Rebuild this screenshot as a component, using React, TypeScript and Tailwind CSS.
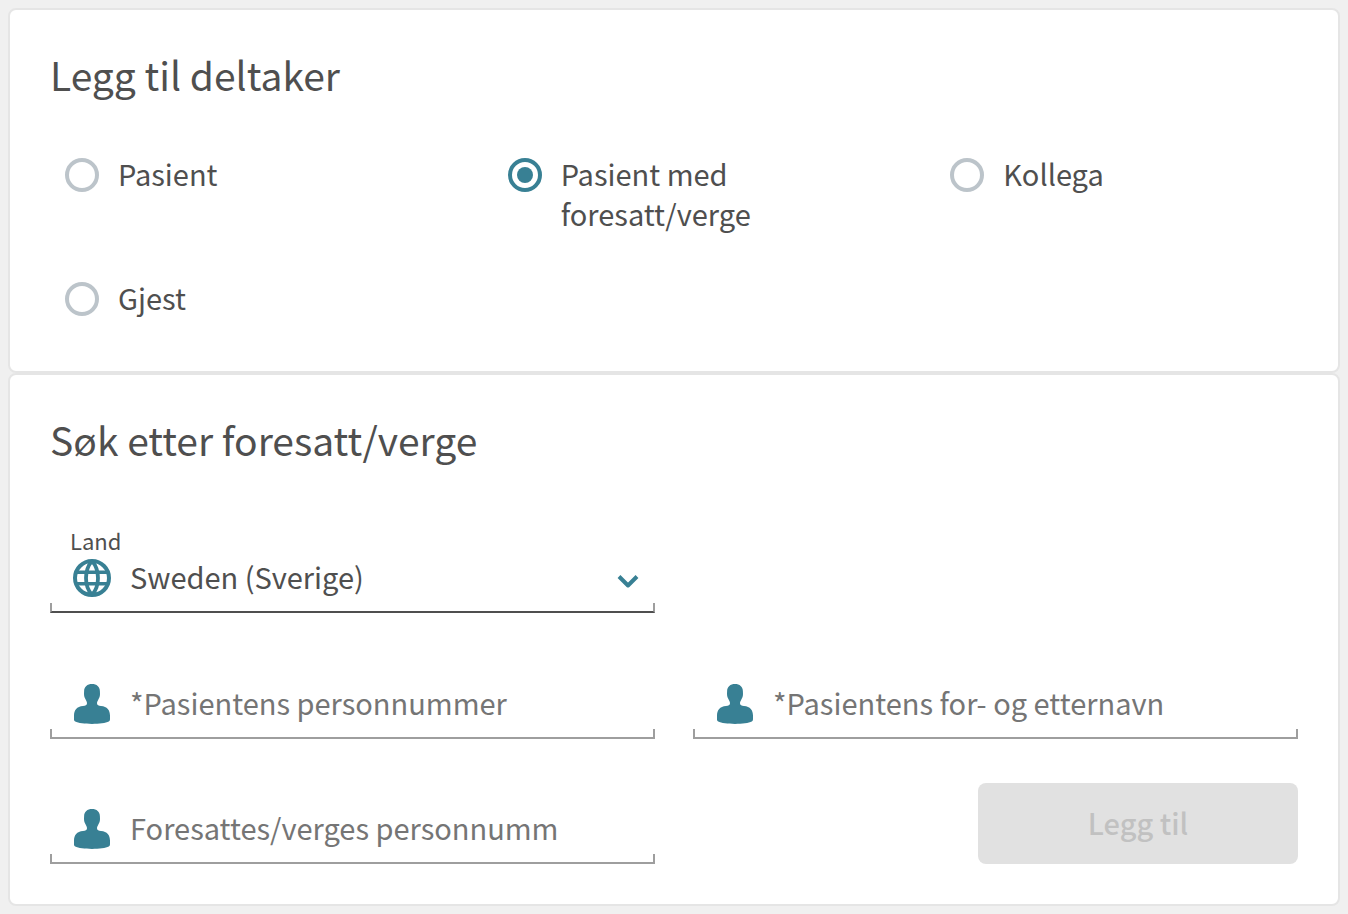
import { useState } from "react";
import type { ReactNode } from "react";

const participantTypes = ["Pasient", "Pasient med foresatt/verge", "Kollega", "Gjest"];

function GlobeIcon() {
  return (
    <svg viewBox="0 0 40 40" className="size-10 shrink-0 text-[#388094]" fill="none" stroke="currentColor" strokeWidth="4" aria-hidden="true">
      <circle cx="20" cy="20" r="17" />
      <path d="M20 3C12 12 12 28 20 37M20 3c8 9 8 25 0 34" strokeWidth="3.800" />
      <path d="M4.500 14.300h31M4.500 25.700h31" strokeWidth="3.600" />
    </svg>
  );
}

function PersonIcon() {
  return (
    <svg viewBox="0 0 40 40" className="size-10 shrink-0 text-[#388094]" fill="currentColor" aria-hidden="true">
      <path d="M20 0c4.600 0 7.900 2.700 7.900 7.200 0 1 .1 1.600.1 2.800 0 3-1.100 4.300-1.900 5.900-.7 1.400-1.100 2-1.100 3.300 0 1.900 1.600 2.500 4 2.700 6.200.6 9 3.900 9 9.900V35c0 1.300-.2 2-1.200 2.600-3 1.600-9.500 2.400-16.800 2.400S6.200 39.200 3.200 37.600C2.200 37 2 36.300 2 35v-3.200c0-6 2.800-9.300 9-9.900 2.400-.2 4-.8 4-2.700 0-1.300-.4-1.900-1.100-3.300-.8-1.600-1.900-2.900-1.900-5.900 0-1.200.1-1.800.1-2.800C12.100 2.700 15.400 0 20 0Z" />
    </svg>
  );
}

function Card({ title, children }: { title: string; children: ReactNode }) {
  return (
    <section className="rounded-lg border-2 border-[#e5e5e5] bg-white px-10 pt-[38px] pb-10">
      <h2 className="text-[39px] leading-[52px]">{title}</h2>
      {children}
    </section>
  );
}

function TextField({ id, label }: { id: string; label: string }) {
  return (
    <div className="flex flex-col justify-end">
      <div className="flex h-[50px] items-center gap-[18px] pr-24 pl-[22px]">
        <PersonIcon />
        <input
          id={id}
          type="text"
          aria-label={label}
          placeholder={label}
          className="h-[50px] min-w-0 flex-1 bg-transparent pb-1 outline-none placeholder:text-[#757575]"
        />
      </div>
      <div className="h-[10px] border-x-2 border-b-2 border-[#9e9e9e]" />
    </div>
  );
}

export default function App() {
  const [selected, setSelected] = useState(participantTypes[1]);

  return (
    <main className="min-h-screen bg-[#f0f0f0] p-2 font-['Noto_Sans_CJK_SC',sans-serif] text-[29px] leading-10 text-[#4f4f4f]">
      <Card title="Legg til deltaker">
        <div className="mt-[53px] mb-[14px] grid grid-cols-3 gap-x-20 gap-y-11">
          {participantTypes.map((type) => (
            <label key={type} className="flex items-start gap-[19px] pl-[15px]">
              <input
                type="radio"
                name="participant"
                checked={selected === type}
                onChange={() => setSelected(type)}
                className="mt-[5px] grid size-[34px] shrink-0 appearance-none place-items-center rounded-full border-4 border-[#bcc4ca] before:size-4 before:rounded-full checked:border-[#388094] checked:before:bg-[#388094]"
              />
              <span>{type}</span>
            </label>
          ))}
        </div>
      </Card>

      <Card title="Søk etter foresatt/verge">
        <form onSubmit={(e) => e.preventDefault()} className="mt-[67px]">
          <div className="mb-[45px] grid grid-cols-2 gap-x-[38px]">
            <div>
              <label htmlFor="country" className="block pb-1 pl-5 text-[22px] leading-[17px]">
                Land
              </label>
              <div className="relative flex h-[50px] items-center gap-[18px] pl-[22px]">
                <GlobeIcon />
                <select id="country" className="h-[50px] min-w-0 flex-1 appearance-none bg-transparent pb-1 outline-none">
                  <option>Sweden (Sverige)</option>
                </select>
                <svg viewBox="0 0 22 16" className="pointer-events-none absolute top-5 right-4 h-4 w-[22px] text-[#388094]" fill="none" stroke="currentColor" strokeWidth="4" strokeLinejoin="round" aria-hidden="true">
                  <path d="M2 3.500l9 9 9-9" />
                </svg>
              </div>
              <div className="h-[10px] border-x-2 border-b-2 border-x-[#9e9e9e] border-b-[#4f4f4f]" />
            </div>
          </div>
          <div className="grid auto-rows-[81px] grid-cols-2 gap-x-[38px] gap-y-11">
            <TextField id="patient-number" label="*Pasientens personnummer" />
            <TextField id="patient-name" label="*Pasientens for- og etternavn" />
            <TextField id="guardian-number" label="Foresattes/verges personnummer" />
            <button type="submit" disabled className="w-80 justify-self-end rounded-lg bg-[#e1e1e1] pb-1 font-medium text-[#c1c1c1]">
              Legg til
            </button>
          </div>
        </form>
      </Card>
    </main>
  );
}
